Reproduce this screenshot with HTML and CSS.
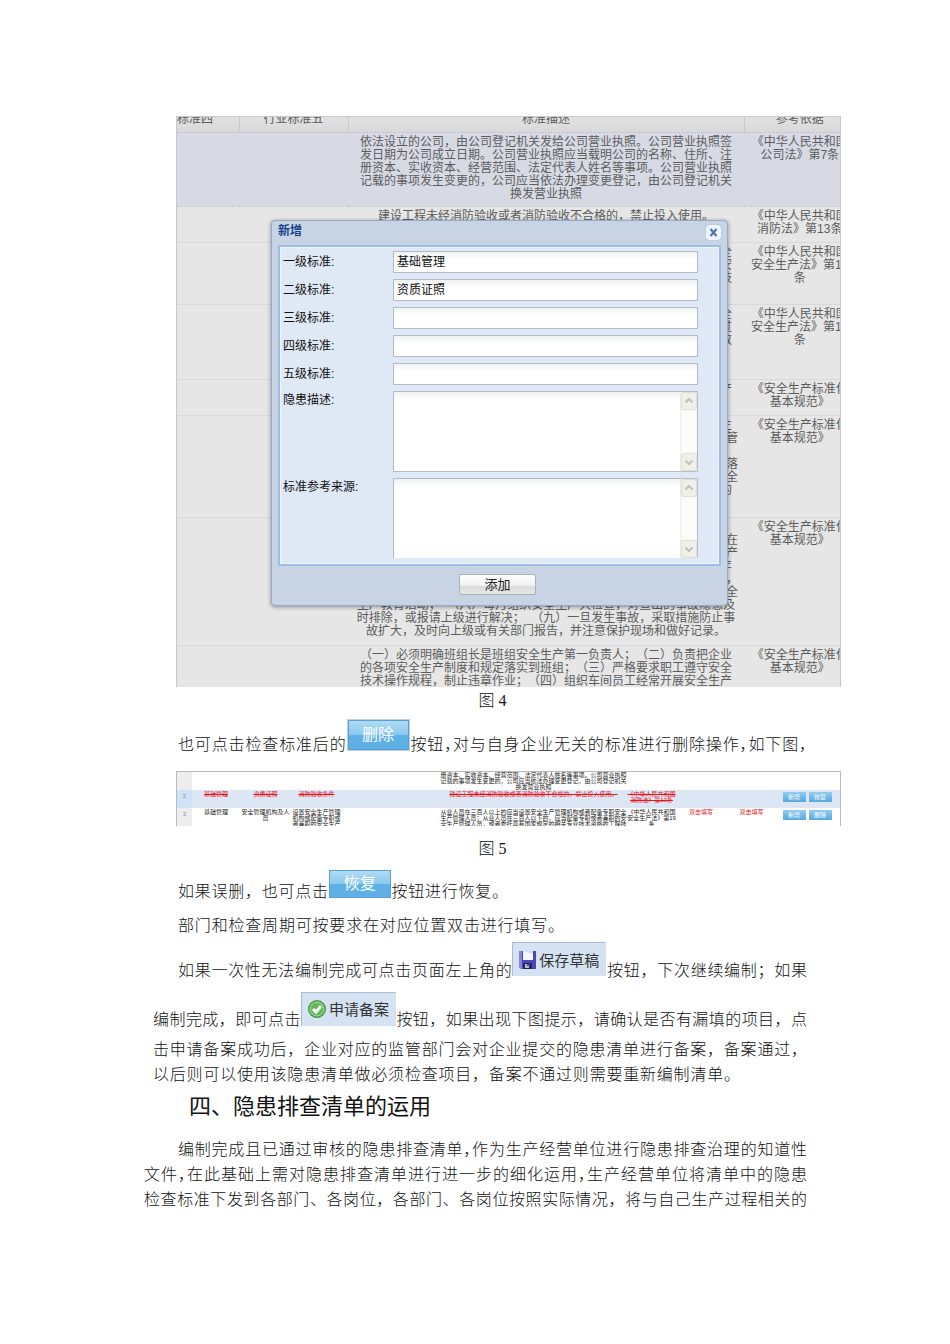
FILE: index.html
```html
<!DOCTYPE html>
<html lang="zh-CN">
<head>
    <meta charset="UTF-8">
    <title>隐患排查清单</title>
    <meta name="viewport" content="width=device-width, initial-scale=1.0">
    <link rel="stylesheet" href="styles.css">
</head>
<body>
    <main class="page">
        <!-- 图 4 -->
        <div class="shot shot-dialog">
            <table class="grid">
                <colgroup>
                    <col class="c-four"><col class="c-five"><col class="c-desc"><col class="c-ref">
                </colgroup>
                <thead>
                    <tr><th class="cut">标准四</th><th>行业标准五</th><th>标准描述</th><th>参考依据</th></tr>
                </thead>
                <tbody>
                    <tr class="r1 selected">
                        <td></td><td></td>
                        <td>依法设立的公司，由公司登记机关发给公司营业执照。公司营业执照签<br>发日期为公司成立日期。公司营业执照应当载明公司的名称、住所、注<br>册资本、实收资本、经营范围、法定代表人姓名等事项。公司营业执照<br>记载的事项发生变更的，公司应当依法办理变更登记，由公司登记机关<br>换发营业执照</td>
                        <td>《中华人民共和国<br>公司法》第7条</td>
                    </tr>
                    <tr class="r2">
                        <td></td><td></td>
                        <td>建设工程未经消防验收或者消防验收不合格的，禁止投入使用。</td>
                        <td>《中华人民共和国<br>消防法》第13条</td>
                    </tr>
                    <tr class="r3">
                        <td></td><td></td>
                        <td>从业人员在三百人以上的应当设置安全生产管理机构或者配备专职安全<br>生产管理人员；从业人员在三百人以下的，应当配备专职或者兼职的安<br>全生产管理人员，或者委托具有国家规定的相关专业技术资格的工程技<br>术人员提供安全生产管理服务</td>
                        <td>《中华人民共和国<br>安全生产法》第19<br>条</td>
                    </tr>
                    <tr class="r4">
                        <td></td><td></td>
                        <td>危险物品的生产、经营、储存单位以及矿山、建筑施工单位应当设安全<br>生产管理机构或者配备专职安全生产管理人员，其他单位从业人员超过<br>三百人的，应当设置安全生产管理机构或者配备专职人员，按照总人数<br>配备安全生产管理人员</td>
                        <td>《中华人民共和国<br>安全生产法》第19<br>条</td>
                    </tr>
                    <tr class="r5">
                        <td></td><td></td>
                        <td>企业应根据自身安全生产实际，制定总体和年度安全生产目标，按照产<br>量逐级分解</td>
                        <td>《安全生产标准化<br>基本规范》</td>
                    </tr>
                    <tr class="r6">
                        <td></td><td></td>
                        <td>企业应建立安全生产责任制，明确各级有关单位、部门和人员的安全生<br>产职责；主要负责人应当按照法律法规赋予的职责，全面负责安全生产管<br>理工作，并履行安全生产义务；各级从业人员应掌握本岗位的安全生<br>产职责和操作要求，定期对责任制的落实情况进行检查与考核，并保证落<br>实到位；企业应当设置安全生产管理机构，按规定配备专职或兼职的安全<br>生产管理人员，建立健全从管理机构到基层班组的安全管理网络体系的</td>
                        <td>《安全生产标准化<br>基本规范》</td>
                    </tr>
                    <tr class="r7">
                        <td></td><td></td>
                        <td>（一）贯彻执行安全生产的法规和制度；（二）负责落实本车间以上<br>各项安全生产规定，组织制定了安全操作规程；（三）在布置生产时，在<br>计划中落实安全措施；（四）经常检查设备和作业环境，并保证安全生产<br>条件；（五）对新工人进行安全教育，组织车间各个班组定期开展每年<br>的安全活动，教育职工正确使用劳动防护用品，并遵守安全的操作规程，<br>总结推广安全生产先进经验，组织职工学习安全知识，定期组织开展安全<br>生产教育活动；&nbsp; （六）每月组织安全生产大检查，对查出的事故隐患及<br>时排除，或报请上级进行解决；&nbsp; （九）一旦发生事故，采取措施防止事<br>故扩大，及时向上级或有关部门报告，并注意保护现场和做好记录。</td>
                        <td>《安全生产标准化<br>基本规范》</td>
                    </tr>
                    <tr class="r8">
                        <td></td><td></td>
                        <td>（一）必须明确班组长是班组安全生产第一负责人；（二）负责把企业<br>的各项安全生产制度和规定落实到班组；（三）严格要求职工遵守安全<br>技术操作规程，制止违章作业；（四）组织车间员工经常开展安全生产</td>
                        <td>《安全生产标准化<br>基本规范》</td>
                    </tr>
                </tbody>
            </table>

            <form class="dialog">
                <div class="dialog-title">
                    <span>新增</span>
                    <button type="button" class="close" aria-label="关闭">
                        <svg width="15" height="15" viewBox="0 0 15 15"><path d="M4.500 4l6 7M10.500 4l-6 7" fill="none" stroke="#4a6fb5" stroke-width="2"/></svg>
                    </button>
                </div>
                <div class="dialog-body">
                    <div class="field"><label for="l1">一级标准:</label><input type="text" id="l1" value="基础管理"></div>
                    <div class="field"><label for="l2">二级标准:</label><input type="text" id="l2" value="资质证照"></div>
                    <div class="field"><label for="l3">三级标准:</label><input type="text" id="l3"></div>
                    <div class="field"><label for="l4">四级标准:</label><input type="text" id="l4"></div>
                    <div class="field"><label for="l5">五级标准:</label><input type="text" id="l5"></div>
                    <div class="field area">
                        <label for="desc">隐患描述:</label>
                        <div class="box">
                            <textarea id="desc"></textarea>
                            <div class="scroll">
                                <svg viewBox="0 0 14 16"><path d="M3.500 9.500L7 6l3.500 3.500"/></svg>
                                <svg viewBox="0 0 14 16"><path d="M3.500 6.500L7 10l3.500-3.500"/></svg>
                            </div>
                        </div>
                    </div>
                    <div class="field area">
                        <label for="source">标准参考来源:</label>
                        <div class="box box-open">
                            <textarea id="source"></textarea>
                            <div class="scroll">
                                <svg viewBox="0 0 14 16"><path d="M3.500 9.500L7 6l3.500 3.500"/></svg>
                                <svg viewBox="0 0 14 16"><path d="M3.500 6.500L7 10l3.500-3.500"/></svg>
                            </div>
                        </div>
                    </div>
                </div>
                <div class="dialog-foot"><button type="button" class="add">添加</button></div>
            </form>
        </div>
        <p class="caption">图 4</p>

        <section class="notes">
            <p class="line indent first snug">也可点击检查标准后的<button type="button" class="blue framed">删除</button>按钮，对与自身企业无关的标准进行删除操作，如下图，</p>
        </section>

        <!-- 图 5 -->
        <div class="shot shot-list">
            <table class="mini">
                <colgroup>
                    <col class="m-no"><col class="m-a"><col class="m-b"><col class="m-b"><col class="m-gap"><col class="m-desc"><col class="m-ref"><col class="m-dept"><col class="m-b"><col>
                </colgroup>
                <tbody>
                    <tr class="m1">
                        <td class="no"></td><td></td><td></td><td></td><td></td>
                        <td>册资本、实收资本、经营范围、法定代表人姓名等事项。公司营业执照<br>记载的事项发生变更的，公司应当依法办理变更登记，由公司登记机关<br>换发营业执照</td>
                        <td></td><td></td><td></td><td></td>
                    </tr>
                    <tr class="m2">
                        <td class="no">2</td><td><s>基础管理</s></td><td><s>资质证照</s></td><td><s>消防验收条件</s></td><td></td>
                        <td><s>建设工程未经消防验收或者消防验收不合格的，禁止投入使用。</s></td>
                        <td><s>《中华人民共和国<br>消防法》第13条</s></td><td></td><td class="mark"></td>
                        <td class="ops"><button type="button">新增</button><button type="button">恢复</button></td>
                    </tr>
                    <tr class="m3">
                        <td class="no">3</td><td>基础管理</td><td>安全管理机构及人<br>员</td><td>设置安全生产管理<br>机构或配备专职或<br>者兼职的安全生产</td><td></td>
                        <td>从业人员在三百人以上的应当设置安全生产管理机构或者配备专职安全<br>生产管理人员；从业人员在三百人以下的，应当配备专职或者兼职的安<br>全生产管理人员，或者委托具有国家规定的相关专业技术资格的工程技</td>
                        <td>《中华人民共和国<br>安全生产法》第19<br>条</td><td class="red">双击填写</td><td class="red">双击填写</td>
                        <td class="ops"><button type="button">新增</button><button type="button">删除</button></td>
                    </tr>
                </tbody>
            </table>
        </div>
        <p class="caption second">图 5</p>

        <section class="notes">
            <p class="line indent short-a">如果误删，也可点击<button type="button" class="blue">恢复</button>按钮进行恢复。</p>
            <p class="line indent short-b">部门和检查周期可按要求在对应位置双击进行填写。</p>
            <p class="line indent">如果一次性无法编制完成可点击页面左上角的<button type="button" class="tool"><svg width="17" height="19" viewBox="0 0 17 19"><path d="M0 1h17v18H2l-2-2z" fill="#4b49b5"/><path d="M0 1h3v18H2l-2-2z" fill="#8584d8"/><path d="M4 1h10v9H4z" fill="#f3f7ff"/><path d="M4 1h10v3z" fill="#c9daf5"/><path d="M4 13h9v6H4z" fill="#25245f"/><path d="M6 14h4v4H6z" fill="#b9bccb"/><path d="M8 14h3v2H8z" fill="#4d4f66"/></svg>保存草稿</button>按钮，下次继续编制；如果</p>
            <p class="line before-tight">编制完成，即可点击<button type="button" class="tool"><svg width="18" height="18" viewBox="0 0 18 18"><circle cx="9" cy="9" r="9" fill="#3d9a45"/><circle cx="9" cy="9" r="7" fill="#63b95a" stroke="#b5e0ac"/><path d="M5 9l3 3 5-6" fill="none" stroke="#fff" stroke-width="3"/></svg>申请备案</button>按钮，如果出现下图提示，请确认是否有漏填的项目，点</p>
            <p class="line tight">击申请备案成功后，企业对应的监管部门会对企业提交的隐患清单进行备案，备案通过，</p>
            <p class="line tight short-c">以后则可以使用该隐患清单做必须检查项目，备案不通过则需要重新编制清单。</p>
        </section>

        <h2>四、隐患排查清单的运用</h2>

        <section class="notes wide">
            <p class="line tight indent-wide snug">编制完成且已通过审核的隐患排查清单，作为生产经营单位进行隐患排查治理的知道性</p>
            <p class="line tight snug">文件，在此基础上需对隐患排查清单进行进一步的细化运用，生产经营单位将清单中的隐患</p>
            <p class="line tight">检查标准下发到各部门、各岗位，各部门、各岗位按照实际情况，将与自己生产过程相关的</p>
        </section>
    </main>
</body>
</html>
```

FILE: styles.css
```css
* {
    box-sizing: border-box;
}

body {
    margin: 0;
    background: #fff;
    color: #111;
    font-family: "Liberation Serif", "Noto Sans CJK SC", serif;
    font-size: 16px;
    font-weight: 300;
    line-height: 25px;
}

p, h2 {
    margin: 0;
}

button, input, textarea {
    font-family: "Liberation Sans", "Noto Sans CJK SC", sans-serif;
    margin: 0;
    padding: 0;
}

.page {
    padding: 116px 109px 40px 144px;
}

/* screenshots */
.shot {
    position: relative;
    margin-left: 32px;
    overflow: hidden;
    font-family: "Liberation Sans", "Noto Sans CJK SC", sans-serif;
    font-weight: 400;
    text-spacing-trim: space-all;
}

.shot-dialog {
    height: 571px;
    background: #e6e6e6;
    border: 1px solid #c8c8c8;
    border-bottom: 0;
}

.grid {
    table-layout: fixed;
    width: 679px;
    border-collapse: collapse;
    color: #5c5c5c;
    font-size: 12px;
    line-height: 13px;
    text-align: center;
    white-space: nowrap;
}

.c-four { width: 62px; }
.c-five { width: 109px; }
.c-desc { width: 396px; }

.grid th {
    height: 15px;
    padding: 0;
    vertical-align: top;
    line-height: 5px;
    font-weight: 400;
    background: linear-gradient(#e2e2e2, #d8d8d8);
    border-right: 1px solid #cacaca;
}

.grid th.cut {
    text-align: left;
}

.grid td {
    padding: 3px 0 0;
    vertical-align: top;
    border-bottom: 1px solid #d9d9d9;
}

.grid .selected td {
    background: #d7dae5;
    border-top: 1px dotted #b8bccb;
    border-bottom: 1px dotted #b8bccb;
}

.r1 { height: 74px; }
.r2 { height: 36px; }
.r3 { height: 62px; }
.r4 { height: 75px; }
.r5 { height: 36px; }
.r6 { height: 102px; }
.r7 { height: 128px; }
.r8 { height: 60px; }

/* dialog */
.dialog {
    position: absolute;
    left: 94px;
    top: 103px;
    width: 457px;
    padding: 0 6px;
    background: #c8d4e3;
    border: 1px solid #8fabce;
    border-radius: 4px;
    box-shadow: 0 1px 4px rgba(0, 0, 0, 0.4);
    font-size: 12px;
    color: #111;
}

.dialog-title {
    display: flex;
    justify-content: space-between;
    height: 24px;
    line-height: 20px;
    font-weight: 700;
    color: #15428b;
}

.close {
    width: 15px;
    height: 15px;
    margin-top: 4px;
    display: flex;
    background: #eef4fd;
    border: 0;
    border-radius: 3px;
    box-shadow: 0 0 1px #5f83bb;
}

.dialog-body {
    display: flex;
    flex-direction: column;
    gap: 6px;
    height: 321px;
    padding: 4px 21px 5px 3px;
    background: #dfe8f5;
    border: 2px solid #9dbce6;
    box-shadow: inset 0 0 0 1px #eef5ff;
}

.field {
    display: flex;
    justify-content: space-between;
    line-height: 22px;
}

.field input, .box {
    width: 305px;
    background: linear-gradient(#eef2f2, #fff 7px);
    border: 1px solid #b5b8cb;
}

.field input {
    height: 22px;
    padding: 0 3px 4px;
    font-size: 12px;
    color: #111;
}

.field.area {
    line-height: 19px;
}

.box {
    display: flex;
    height: 81px;
}

.box-open {
    height: 80px;
    border-bottom: 0;
}

.box textarea {
    flex: 1;
    min-width: 0;
    border: 0;
    resize: none;
    background: none;
    overflow: hidden;
}

.scroll {
    display: flex;
    flex-direction: column;
    justify-content: space-between;
    width: 17px;
    padding: 1px;
    background: #fbfbf8;
    border-left: 1px solid #eee;
}

.scroll svg {
    width: 14px;
    height: 16px;
    background: #f0f0e8;
    box-shadow: 0 0 1px 1px #dcdccf;
    border-radius: 2px;
    fill: none;
    stroke: #bfc0b8;
    stroke-width: 2;
}

.dialog-foot {
    display: flex;
    justify-content: center;
    height: 39px;
    padding: 8px 4px 0 0;
}

.add {
    width: 77px;
    height: 21px;
    background: linear-gradient(#fff, #f0f0f0 55%, #dcdcdc 60%, #e6e6e6);
    border: 1px solid #a9b0b8;
    border-radius: 2px;
    font-size: 13px;
    line-height: 18px;
    color: #222;
}

/* captions and text */
.caption {
    line-height: 28px;
    text-align: center;
}

.caption.second {
    margin: 9px 0 7px;
}

.notes {
    margin: 0 34px 0 9px;
}

.notes.wide {
    margin-left: 0;
}

.line {
    text-align: justify;
    text-align-last: justify;
    margin-bottom: 9px;
}

.line.first {
    margin: 4px 0 14px;
}

.line.tight {
    margin-bottom: 0;
}

.line.before-tight {
    margin-bottom: 5px;
}

/* half-width punctuation */
.snug {
    font-feature-settings: "halt";
}

.indent {
    padding-left: 25px;
}

.indent-wide {
    padding-left: 34px;
}

.line.short-a { margin-right: 299px; }
.line.short-b { margin-right: 243px; margin-bottom: 4px; }
.line.short-c { margin-right: 67px; }

h2 {
    margin: 5px 0 15px 45px;
    font-family: "Liberation Sans", "Noto Sans CJK SC", sans-serif;
    font-size: 22px;
    font-weight: 400;
    line-height: 30px;
}

.blue {
    width: 62px;
    height: 28px;
    vertical-align: 8px;
    background: linear-gradient(#b2dcf4, #8ccaf0 48%, #5db0e6 52%, #5fb0e4);
    border: 1px solid #5a9fcf;
    color: #fff;
    font-size: 16px;
    line-height: 24px;
    text-align-last: center;
}

.blue.framed {
    width: 63px;
    height: 32px;
    vertical-align: 10px;
    border: 1px solid #bfcfe4;
    box-shadow: inset 0 0 0 1px #5a9fcf;
}

.tool {
    display: inline-flex;
    align-items: center;
    gap: 3px;
    height: 34px;
    padding: 0 6px;
    vertical-align: 7px;
    background: #d5e2f1;
    border: 1px solid #a9bcd6;
    border-right-color: #d5e2f1;
    border-bottom-color: #d5e2f1;
    color: #333;
    font-size: 15px;
}

.tool svg {
    flex: none;
}

/* list rows */
.shot-list {
    height: 55px;
    border: 1px solid #bbb;
    border-bottom: 0;
}

.mini {
    table-layout: fixed;
    width: 100%;
    border-collapse: collapse;
    font-size: 6px;
    line-height: 6px;
    text-align: center;
    white-space: nowrap;
    color: #222;
}

.m-no { width: 15px; }
.m-a { width: 48px; }
.m-b { width: 51px; }
.m-gap { width: 98px; }
.m-desc { width: 187px; }
.m-ref { width: 49px; }
.m-dept { width: 50px; }

.mini td {
    padding: 1px 0 0;
    vertical-align: top;
}

.m1 { height: 18px; }
.m1 td { padding: 0; }
.m2 { height: 18px; }
.m3 { height: 19px; }

.mini .m2 td {
    background: #dce6f4;
}

.m2 s, .red {
    color: #e8141c;
}

.mini .no {
    background: #ededed;
    color: #888;
    padding-top: 3px;
}

.mini .m2 .no {
    background: #cfe2f7;
}

.mini .mark {
    background: linear-gradient(#e8141c, #e8141c) right 2px top 1px / 2px 2px no-repeat #dce6f4;
}

.mini .ops {
    padding: 2px 0 0;
}

.ops button {
    width: 23px;
    height: 10px;
    margin-right: 3px;
    vertical-align: top;
    background: linear-gradient(#94cdf0, #56a9de);
    border: 0;
    color: #fff;
    font-size: 6px;
    line-height: 10px;
}
```
